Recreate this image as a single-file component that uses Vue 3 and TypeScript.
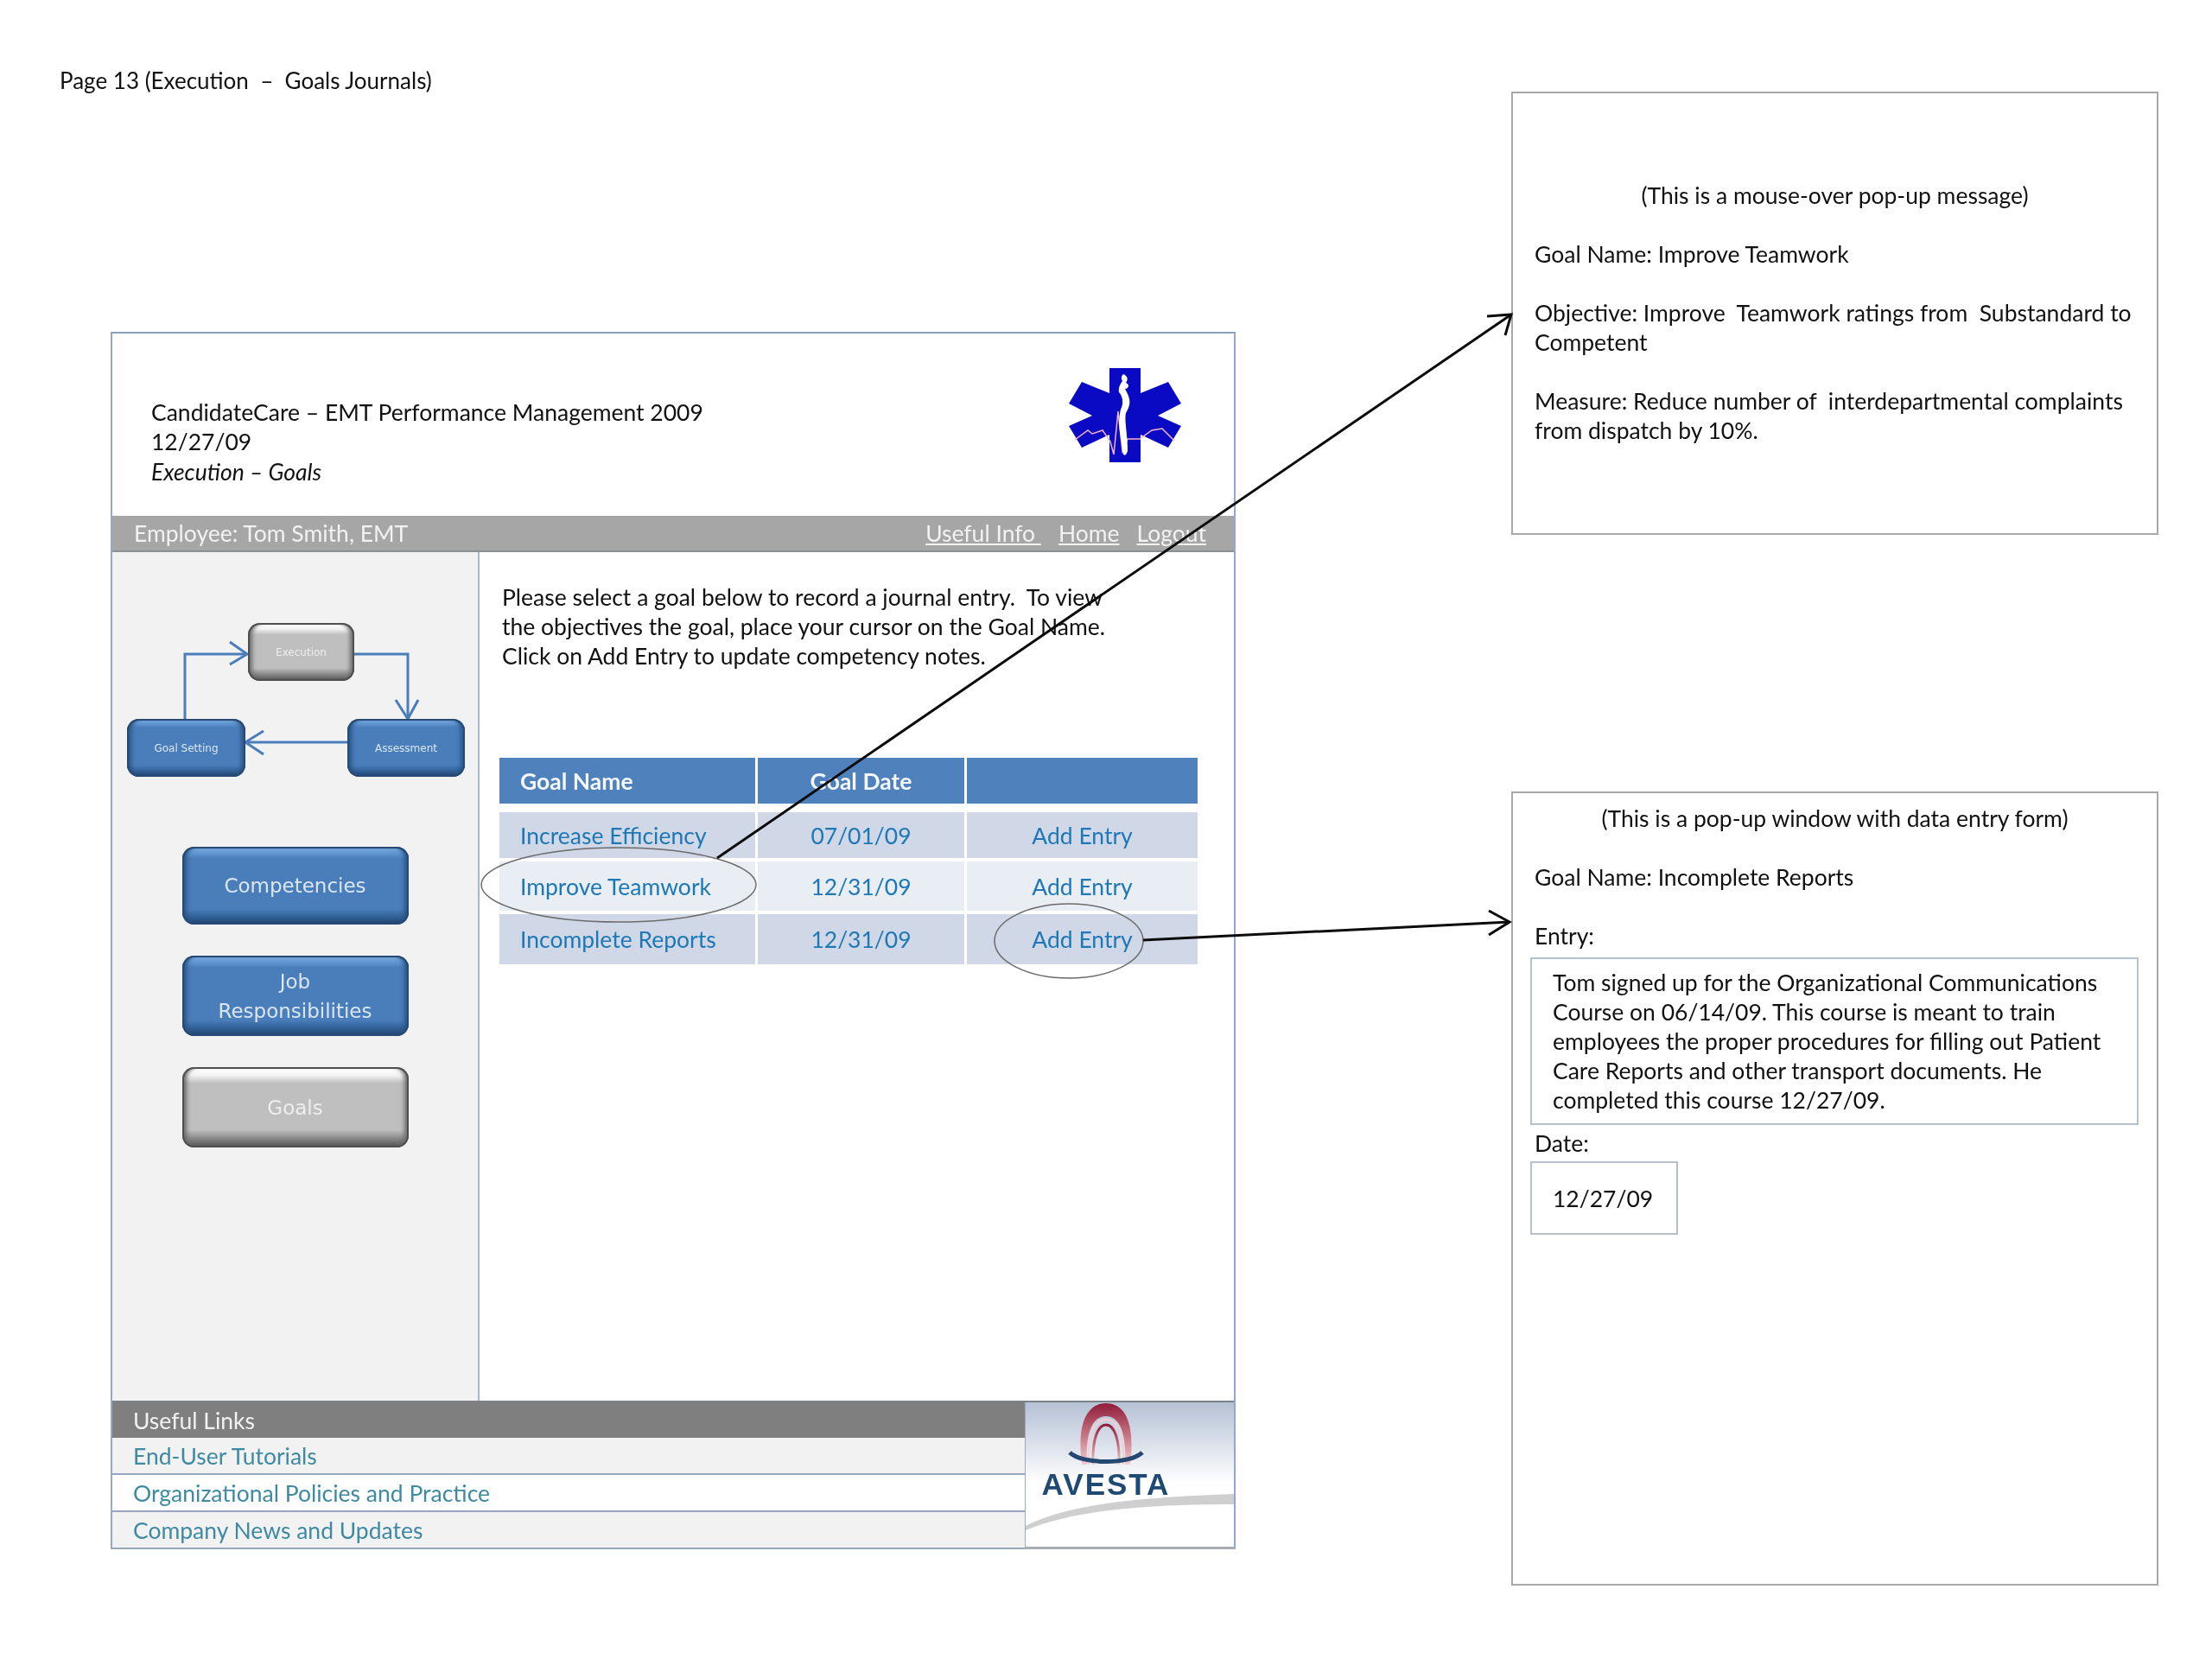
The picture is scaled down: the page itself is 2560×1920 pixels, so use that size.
<script setup lang="ts">
interface GoalRow {
  name: string;
  date: string;
}

const goals: GoalRow[] = [
  { name: 'Increase Efficiency', date: '07/01/09' },
  { name: 'Improve Teamwork', date: '12/31/09' },
  { name: 'Incomplete Reports', date: '12/31/09' },
];

const usefulLinks = ['End-User Tutorials', 'Organizational Policies and Practice', 'Company News and Updates'];
</script>

<template>
  <div class="page">
    <div class="left-col">
      <div class="page-title">Page 13 (Execution &nbsp;–&nbsp; Goals Journals)</div>

      <div class="mock">
        <header class="mock-head">
          <div class="mock-head-text">
            <div>CandidateCare – EMT Performance Management 2009</div>
            <div>12/27/09</div>
            <div class="crumb">Execution – Goals</div>
          </div>
          <svg class="emblem" width="130" height="109" viewBox="0 0 130 109">
            <path
              fill="#0a0ac4"
              d="M47 0H83V29L115 16L130 41L103 55L130 67L115 92L83 77V109H47V77L15 92L0 67L27 55L0 41L15 16L47 29Z"
            />
            <path fill="none" stroke="#f3b5c8" stroke-width="1.5" d="M7 83L22 72L27 76L39 72L48 85L52 100L57 50L62 96L68 82L82 82L96 72L108 70L122 84" />
            <path fill="#fff" d="M63 7C68 9 69 13 66 17C71 19 69 24 65 24C72 36 72 42 66 52C64 60 68 76 68 96C66 103 62 102 62 94C60 78 56 64 60 48C64 40 62 32 58 28C57 22 60 18 62 15C60 12 61 9 63 7Z" />
          </svg>
        </header>

        <div class="mock-bar">
          <span>Employee: Tom Smith, EMT</span>
          <nav class="bar-links">
            <a>Useful Info&nbsp;</a>
            <a>Home</a>
            <a>Logout</a>
          </nav>
        </div>

        <div class="mock-body">
          <aside class="side">
            <div class="flow">
              <svg class="flow-lines" width="425" height="260" viewBox="0 0 425 260">
                <g fill="none" stroke="#4a7ebb" stroke-width="3">
                  <path d="M84 193V118H156" />
                  <path d="M136 104L156 118L136 130" />
                  <path d="M280 118H342V193" />
                  <path d="M328 171L342 193L354 171" />
                  <path d="M272 220H154" />
                  <path d="M175 207L154 220L175 234" />
                </g>
              </svg>
              <div class="btn gray node node-exec">Execution</div>
              <div class="btn node node-goal">Goal Setting</div>
              <div class="btn node node-assess">Assessment</div>
            </div>

            <div class="side-nav">
              <div class="btn nav-btn nav-short">Competencies</div>
              <div class="btn nav-btn">Job<br />Responsibilities</div>
              <div class="btn gray nav-btn">Goals</div>
            </div>
          </aside>

          <main class="content">
            <p class="intro">
              Please select a goal below to record a journal entry. &nbsp;To view<br />
              the objectives the goal, place your cursor on the Goal Name.<br />
              Click on Add Entry to update competency notes.
            </p>

            <div class="goal-table">
              <div class="th th-name">Goal Name</div>
              <div class="th">Goal Date</div>
              <div class="th"></div>
              <template v-for="(g, i) in goals" :key="g.name">
                <div class="td td-name" :class="{ alt: i % 2 === 1 }">{{ g.name }}</div>
                <div class="td" :class="{ alt: i % 2 === 1 }">{{ g.date }}</div>
                <div class="td" :class="{ alt: i % 2 === 1 }">Add Entry</div>
              </template>
            </div>
          </main>
        </div>

        <footer class="mock-foot">
          <div class="foot-links">
            <div class="foot-title">Useful Links</div>
            <div v-for="(link, i) in usefulLinks" :key="link" class="foot-row" :class="{ plain: i === 1 }">{{ link }}</div>
          </div>
          <svg class="foot-logo" width="242" height="170" viewBox="0 0 242 170">
            <defs>
              <linearGradient id="logoBg" x1="0" y1="0" x2="0" y2="1">
                <stop offset="0" stop-color="#b5c1d5" />
                <stop offset="0.55" stop-color="#fff" />
              </linearGradient>
              <linearGradient id="archFade" x1="0" y1="0" x2="0" y2="1">
                <stop offset="0" stop-color="#8f1d3a" />
                <stop offset="0.5" stop-color="#c4707f" />
                <stop offset="1" stop-color="#f3ccd0" />
              </linearGradient>
            </defs>
            <rect width="242" height="170" fill="url(#logoBg)" />
            <rect width="1" height="170" fill="#9aa8c0" />
            <rect y="167" width="242" height="3" fill="#a9acb2" />
            <path fill="#cfcfcf" d="M1 143C50 118 130 110 242 106V118C130 118 55 126 1 148Z" />
            <path fill="url(#archFade)" d="M66 72C60 24 72 1 94 1C116 1 128 24 122 72H116C118 36 110 16 94 16C78 16 70 36 72 72Z" />
            <path fill="none" stroke="#f0d0d4" stroke-width="2" d="M74 72C72 38 80 20 94 20C108 20 116 38 114 72" />
            <path fill="none" stroke="url(#archFade)" stroke-width="3" d="M79 72C78 44 84 26 94 26C104 26 110 44 109 72" />
            <path fill="none" stroke="#24486f" stroke-width="5" d="M52 58C66 72 122 72 136 58" />
            <text class="logo-word" x="94" y="107" text-anchor="middle">AVESTA</text>
          </svg>
        </footer>
      </div>
    </div>

    <div class="right-col">
      <section class="popup popup-msg">
        <p class="center">(This is a mouse-over pop-up message)</p>
        <p>Goal Name: Improve Teamwork</p>
        <p>Objective: Improve &nbsp;Teamwork ratings from &nbsp;Substandard to Competent</p>
        <p>Measure: Reduce number of &nbsp;interdepartmental complaints from dispatch by 10%.</p>
      </section>

      <section class="popup popup-form">
        <p class="center">(This is a pop-up window with data entry form)</p>
        <p>Goal Name: Incomplete Reports</p>
        <p class="label">Entry:</p>
        <div class="field entry-field">
          Tom signed up for the Organizational Communications<br />
          Course on 06/14/09. This course is meant to train<br />
          employees the proper procedures for filling out Patient<br />
          Care Reports and other transport documents. He<br />
          completed this course 12/27/09.
        </div>
        <p class="label date-label">Date:</p>
        <div class="field date-field">12/27/09</div>
      </section>
    </div>

    <!-- callouts drawn over the mockup -->
    <svg class="callouts" width="2560" height="1920" viewBox="0 0 2560 1920">
      <ellipse cx="716" cy="1024" rx="159" ry="43" fill="none" stroke="#6b6b6b" stroke-width="1.5" />
      <ellipse cx="1237" cy="1089" rx="86" ry="43" fill="none" stroke="#6b6b6b" stroke-width="1.5" />
      <g fill="none" stroke="#0c0c0c" stroke-width="3">
        <path d="M830 993L1749 364" />
        <path d="M1721 366L1749 364L1742 388" />
        <path d="M1323 1088L1747 1067" />
        <path d="M1723 1054L1747 1067L1723 1082" />
      </g>
    </svg>
  </div>
</template>

<style scoped>
.page {
  position: relative;
  display: flex;
  width: 2560px;
  height: 1920px;
  background: #fff;
  color: #111;
  font-family: Lato, "Liberation Sans", sans-serif;
  font-size: 26.5px;
  line-height: 34px;
  overflow: hidden;
  filter: blur(0.6px);
}

.left-col {
  width: 1430px;
  flex-shrink: 0;
}

.page-title {
  margin: 76px 0 0 69px;
  height: 34px;
  font-size: 26px;
}

.mock {
  width: 1302px;
  height: 1409px;
  margin: 274px 0 0 128px;
  border-left: 2px solid #93a9c8;
  border-right: 2px solid #93a9c8;
  border-top: 2px solid #8aa0bd;
  box-sizing: border-box;
  display: flex;
  flex-direction: column;
}

.mock-head {
  height: 211px;
  display: flex;
  justify-content: space-between;
  padding: 58px 61px 0 45px;
  box-sizing: border-box;
}

.mock-head-text {
  padding-top: 16px;
}

.crumb {
  font-style: italic;
  padding-top: 1px;
}

.emblem {
  margin-top: -18px;
}

.mock-bar {
  height: 42px;
  flex-shrink: 0;
  box-sizing: border-box;
  background: #a6a6a6;
  border-bottom: 2px solid #8b8f96;
  color: #f2f2f2;
  display: flex;
  justify-content: space-between;
  align-items: center;
  padding: 0 32px 0 25px;
}

.bar-links {
  display: flex;
  gap: 20px;
}

.bar-links a {
  text-decoration: underline;
}

.mock-body {
  height: 982px;
  display: flex;
}

.side {
  width: 425px;
  flex-shrink: 0;
  background: #f2f2f2;
  border-right: 2px solid #a5b8d2;
  box-sizing: border-box;
}

.flow {
  position: relative;
  height: 260px;
}

.flow-lines {
  position: absolute;
  left: 0;
  top: 0;
}

.btn {
  display: flex;
  align-items: center;
  justify-content: center;
  text-align: center;
  box-sizing: border-box;
  color: #dbe6f3;
  background: linear-gradient(#7faee2 0, #5f94d0 9%, #4a7ebb 15%, #4a7ebb 80%, #36679f 88%, #1f436e 100%);
  border-radius: 14px;
  box-shadow: inset 0 0 0 2px #274a73, inset 7px 0 5px -2px #2a5587, inset -7px 0 5px -2px #2a5587;
}

.btn.gray {
  color: #eee;
  background: linear-gradient(#fff 0, #f4f4f4 10%, #bfbfbf 20%, #bfbfbf 78%, #8c8c8c 88%, #4f4f4f 100%);
  box-shadow: inset 0 0 0 2px #4f4f4f, inset 7px 0 5px -2px #6d6d6d, inset -7px 0 5px -2px #6d6d6d;
}

.node {
  position: absolute;
  height: 67px;
  font-family: "DejaVu Sans", sans-serif;
  font-size: 12px;
  line-height: 14px;
}

.node-exec {
  left: 157px;
  top: 82px;
  width: 123px;
}

.node-goal {
  left: 17px;
  top: 193px;
  width: 137px;
}

.node-assess {
  left: 272px;
  top: 193px;
  width: 136px;
}

.side-nav {
  display: flex;
  flex-direction: column;
  align-items: center;
  gap: 36px;
  padding-top: 81px;
}

.nav-btn {
  width: 262px;
  height: 93px;
  font-family: "DejaVu Sans", sans-serif;
  font-size: 23px;
  line-height: 34px;
}

.nav-short {
  height: 90px;
}

.content {
  flex: 1;
  padding: 35px 0 0 23px;
}

.intro {
  margin: 0 0 0 3px;
}

.goal-table {
  display: grid;
  grid-template-columns: 296px 239px 267px;
  grid-template-rows: 63px 57px 61px 62px;
  column-gap: 3px;
  margin-top: 101px;
}

.th,
.td {
  display: flex;
  align-items: center;
  justify-content: center;
}

.th {
  background: #4f81bd;
  color: #f4f7fb;
  font-weight: 700;
  margin-bottom: 10px;
}

.td {
  background: #d0d8e8;
  color: #1d78b5;
  margin-bottom: 4px;
}

.td.alt {
  background: #e9edf4;
}

.th-name,
.td-name {
  justify-content: flex-start;
  padding-left: 24px;
}

.mock-foot {
  flex: 1;
  display: flex;
  border-top: 2px solid #7b7f86;
}

.foot-links {
  flex: 1;
  display: flex;
  flex-direction: column;
}

.foot-title {
  height: 41px;
  padding-left: 24px;
  background: #7f7f7f;
  color: #f2f2f2;
  display: flex;
  align-items: center;
}

.foot-row {
  flex: 1;
  padding-left: 24px;
  background: #f2f2f2;
  color: #3f8aa3;
  border-bottom: 2px solid #97a6c0;
  display: flex;
  align-items: center;
}

.foot-row.plain {
  background: #fff;
}

.foot-logo {
  flex-shrink: 0;
}

.logo-word {
  font-family: "Liberation Sans", sans-serif;
  font-weight: 700;
  font-size: 35px;
  letter-spacing: 2px;
  fill: #1f4a74;
}

.right-col {
  width: 749px;
  margin-left: 319px;
  padding-top: 106px;
}

.popup {
  box-sizing: border-box;
  width: 749px;
  border: 2px solid #a8a8a8;
  padding: 0 18px 0 25px;
}

.popup p {
  margin: 0 0 34px;
}

.popup .center {
  text-align: center;
  margin-right: 7px;
}

.popup-msg {
  height: 513px;
  padding-top: 101px;
  margin-bottom: 297px;
}

.popup-form {
  height: 919px;
  padding-top: 12px;
}

.popup .label {
  margin-bottom: 8px;
}

.popup .date-label {
  margin-bottom: 4px;
}

.field {
  border: 2px solid #b6c0ca;
  box-sizing: border-box;
  margin-left: -5px;
  padding-left: 24px;
}

.entry-field {
  width: 704px;
  height: 194px;
  padding-top: 10px;
  margin-bottom: 4px;
}

.date-field {
  width: 171px;
  height: 85px;
  display: flex;
  align-items: center;
}

.callouts {
  position: absolute;
  left: 0;
  top: 0;
  pointer-events: none;
}
</style>
